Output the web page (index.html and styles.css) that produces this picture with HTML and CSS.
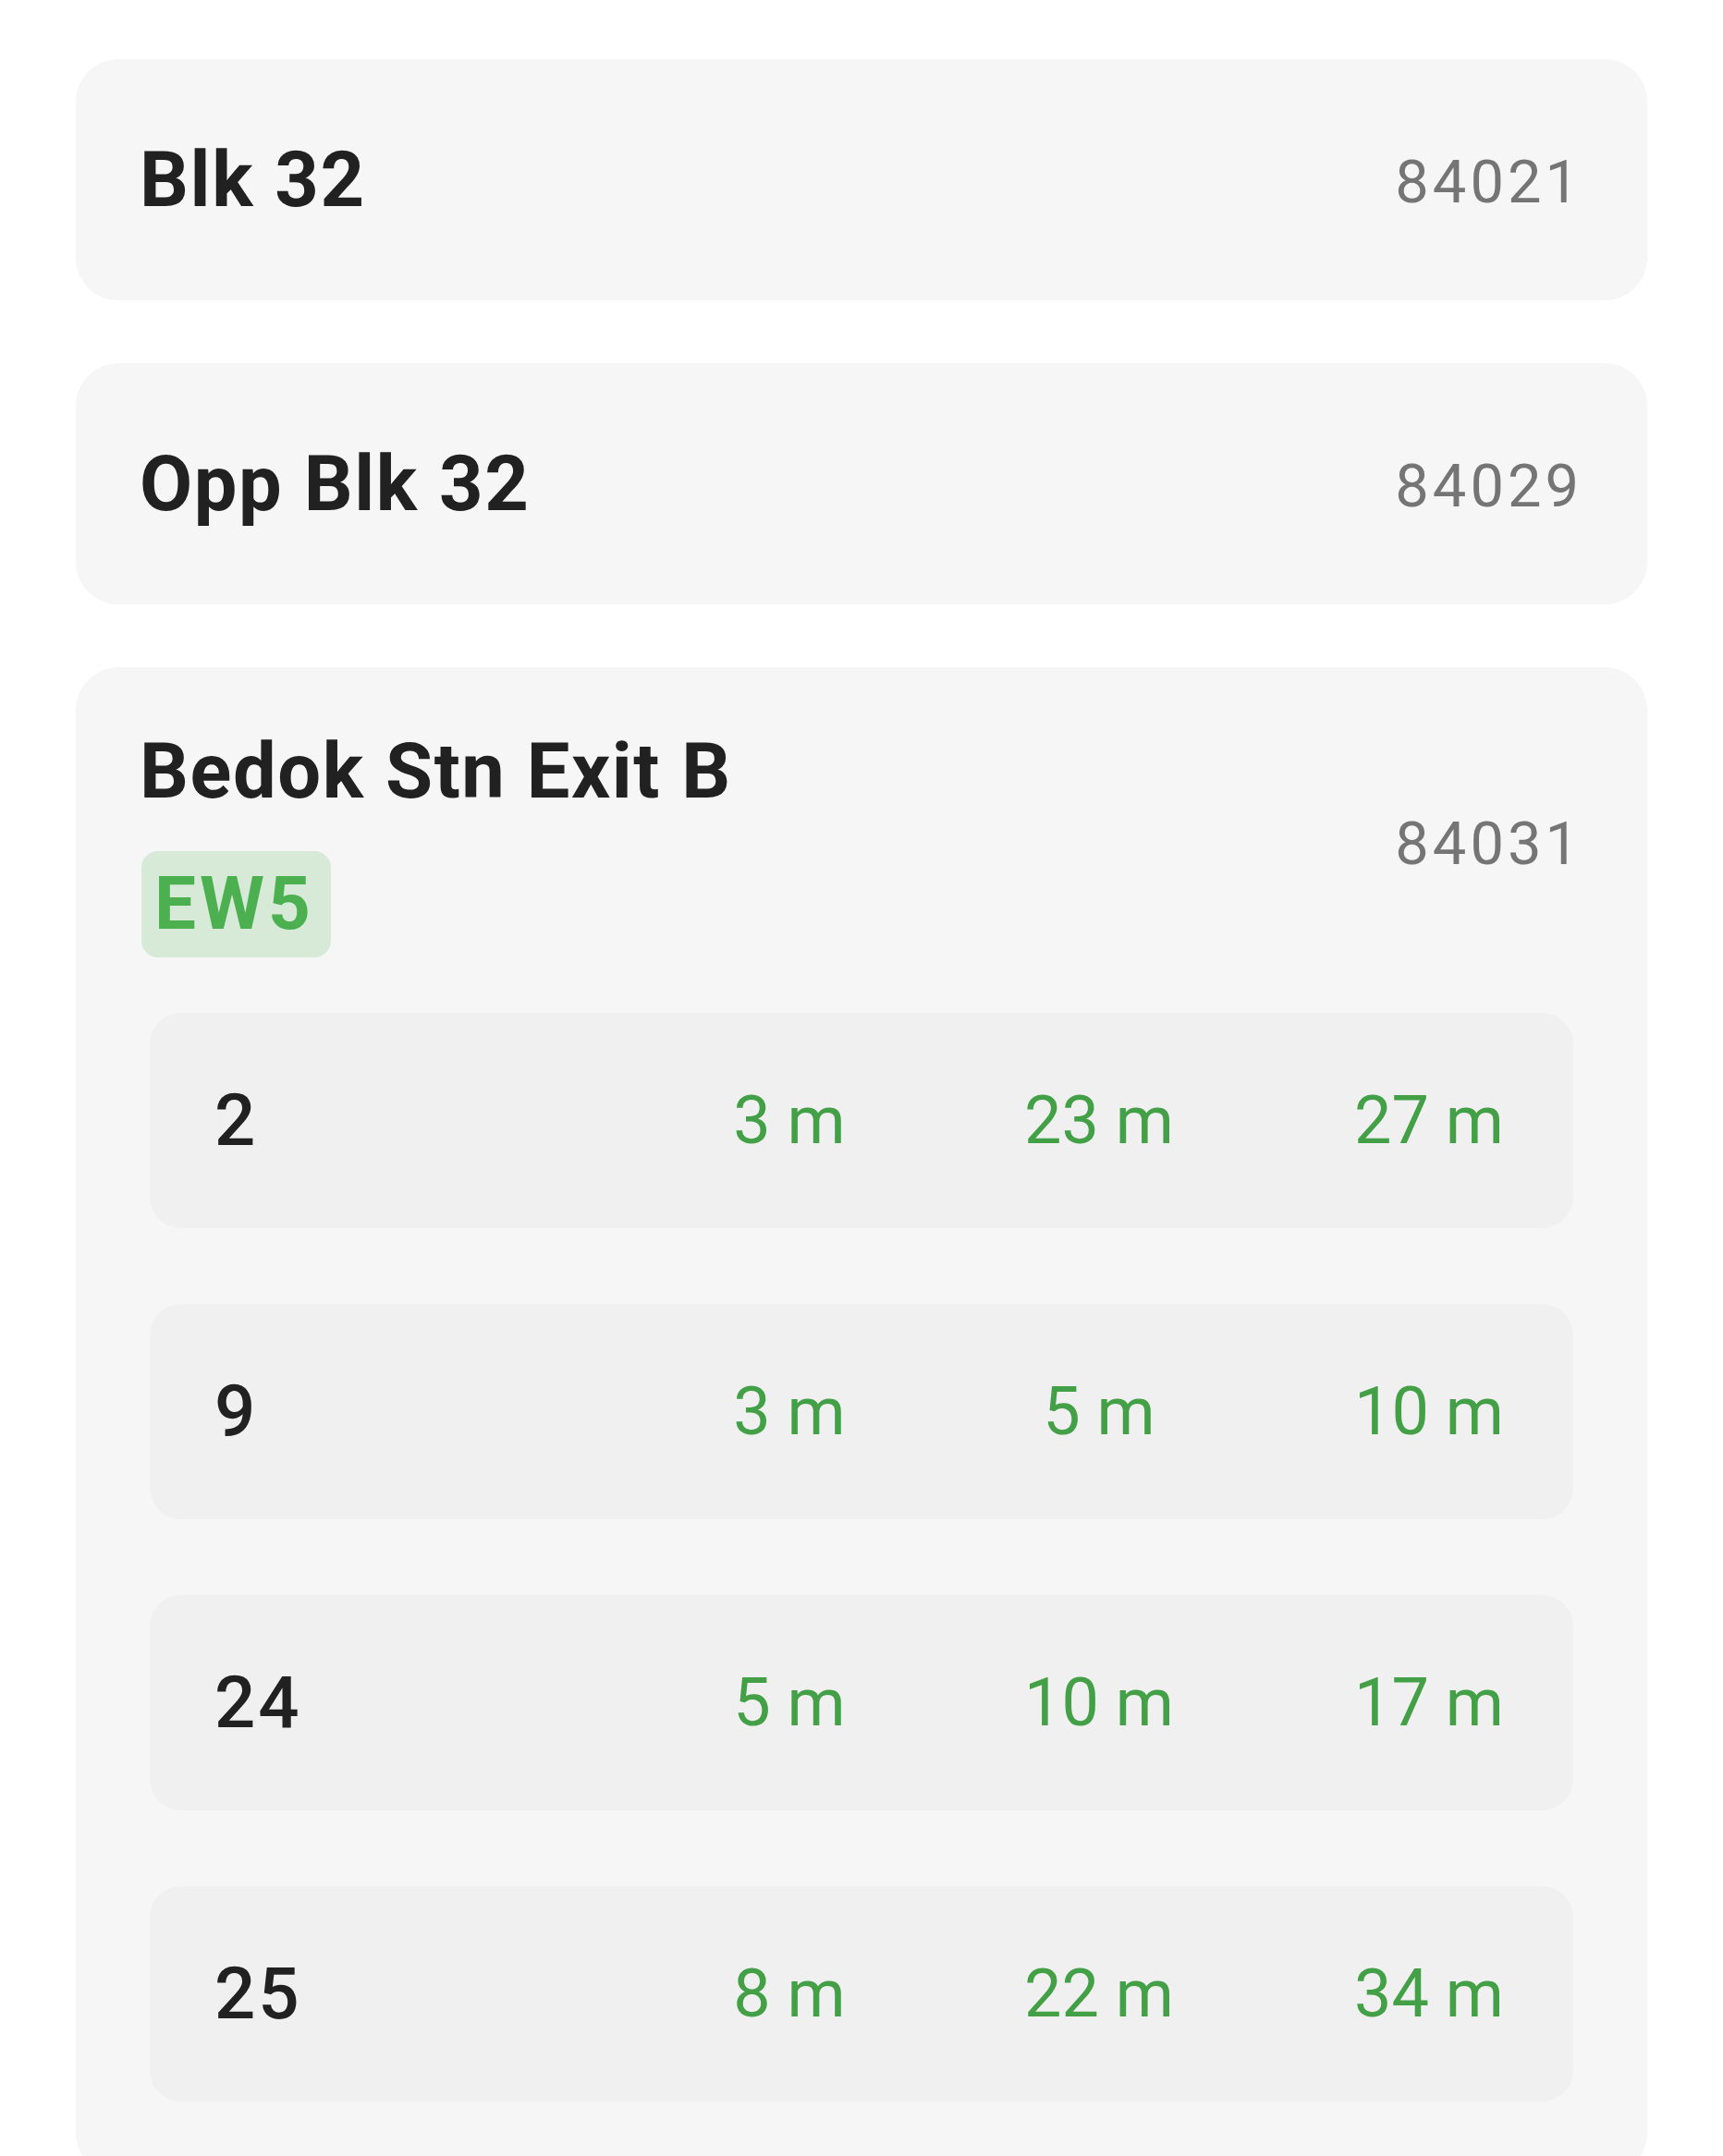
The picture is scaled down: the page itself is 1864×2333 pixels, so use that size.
FILE: index.html
```html
<!DOCTYPE html>
<html lang="en">
<head>
<meta charset="utf-8">
<title>Bus stops</title>
<link rel="stylesheet" href="styles.css">
</head>
<body>
<main class="list">
  <section class="card card-simple">
    <div class="stop-name">Blk 32</div>
    <div class="stop-code">84021</div>
  </section>
  <section class="card card-simple">
    <div class="stop-name">Opp Blk 32</div>
    <div class="stop-code">84029</div>
  </section>
  <section class="card card-expanded">
    <div class="card-header">
      <div class="header-main">
        <div class="stop-name">Bedok Stn Exit B</div>
        <div class="badge">EW5</div>
      </div>
      <div class="stop-code">84031</div>
    </div>
    <div class="services">
      <div class="service">
        <span class="route">2</span>
        <span class="eta">3 m</span>
        <span class="eta">23 m</span>
        <span class="eta">27 m</span>
      </div>
      <div class="service">
        <span class="route">9</span>
        <span class="eta">3 m</span>
        <span class="eta">5 m</span>
        <span class="eta">10 m</span>
      </div>
      <div class="service">
        <span class="route">24</span>
        <span class="eta">5 m</span>
        <span class="eta">10 m</span>
        <span class="eta">17 m</span>
      </div>
      <div class="service">
        <span class="route">25</span>
        <span class="eta">8 m</span>
        <span class="eta">22 m</span>
        <span class="eta">34 m</span>
      </div>
    </div>
  </section>
</main>
</body>
</html>
```

FILE: styles.css
```css
html, body {
  margin: 0;
  padding: 0;
  background: #ffffff;
}

body {
  font-family: Roboto, "Noto Sans", "Liberation Sans", sans-serif;
  color: #212121;
}

.list {
  display: flex;
  flex-direction: column;
  gap: 68px;
  padding: 64px 82px 0;
}

.card {
  background: #f6f6f6;
  border-radius: 46px;
}

.card-simple {
  height: 261px;
  display: flex;
  align-items: center;
  justify-content: space-between;
  padding: 0 70px 0 69px;
}

.stop-name {
  font-size: 83px;
  font-weight: 700;
  line-height: 98px;
  letter-spacing: 1.6px;
  color: #212121;
}

.stop-code {
  font-size: 65px;
  font-weight: 400;
  letter-spacing: 4px;
  line-height: 80px;
  padding-top: 4px;
  color: #757575;
}

.card-expanded {
  padding: 64px 0 80px;
}

.card-header {
  display: flex;
  align-items: center;
  justify-content: space-between;
  padding: 0 70px 0 69px;
}

.header-main {
  display: flex;
  flex-direction: column;
  align-items: flex-start;
  gap: 37px;
}

.badge {
  height: 115px;
  line-height: 115px;
  padding: 0 18px 0 14px;
  margin-left: 2px;
  border-radius: 18px;
  background: #d6ead7;
  color: #4caf50;
  font-size: 80px;
  font-weight: 700;
  letter-spacing: 4px;
}

.services {
  display: flex;
  flex-direction: column;
  gap: 82px;
  margin: 60px 80px 0;
}

.service {
  height: 233px;
  display: grid;
  grid-template-columns: 1fr 156px 514px 200px;
  align-items: center;
  padding: 0 56px 0 70px;
  border-radius: 34px;
  background: #f0f0f0;
}

.route {
  font-size: 78px;
  font-weight: 500;
  letter-spacing: 3px;
  color: #212121;
}

.eta {
  text-align: center;
  font-size: 72px;
  font-weight: 400;
  color: #43a047;
  white-space: nowrap;
}
```
